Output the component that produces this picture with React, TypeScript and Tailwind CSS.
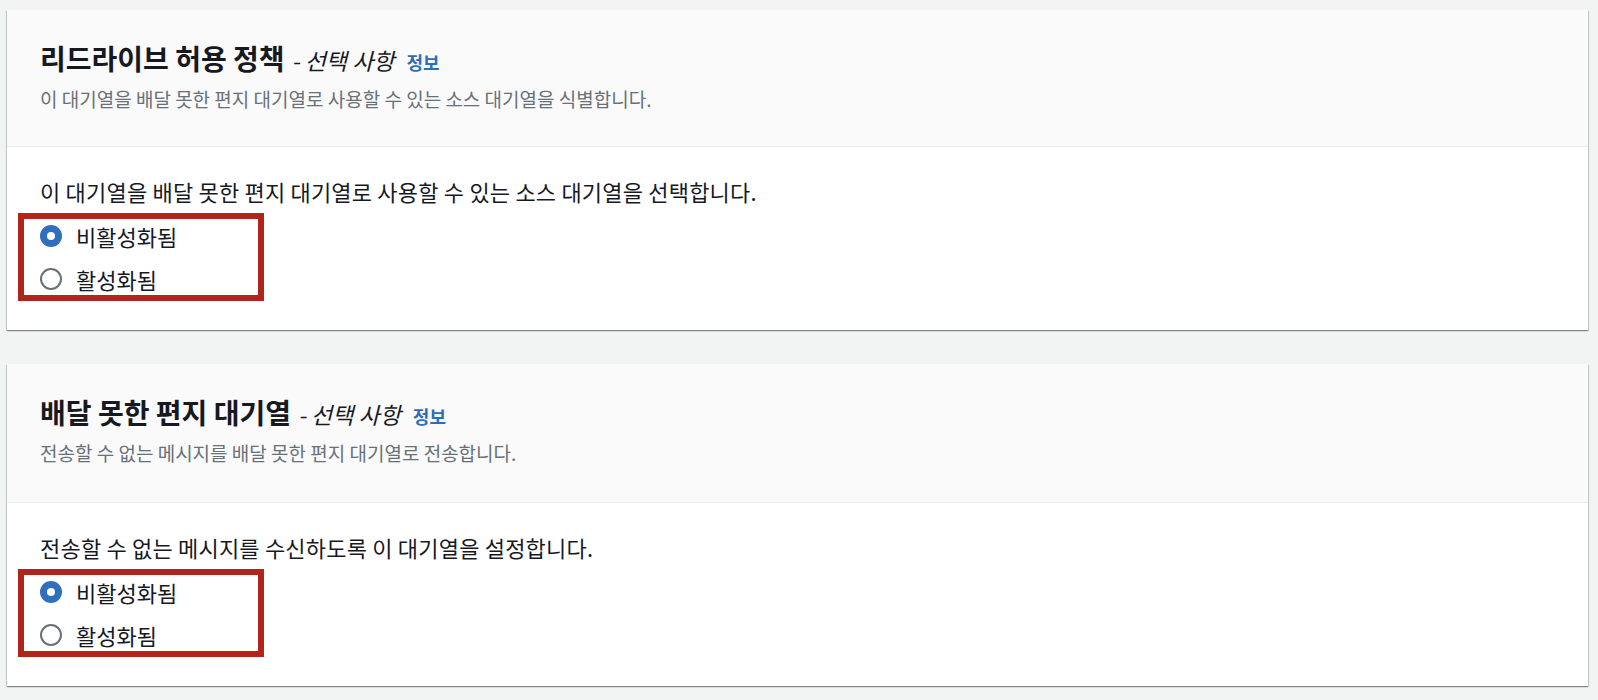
import React from "react";

const font = { fontFamily: '"Noto Sans CJK KR", "Noto Sans", sans-serif' };

interface PanelProps {
  title: string;
  description: string;
  prompt: string;
  headerHeight: string;
}

function Radio({ checked, label }: { checked: boolean; label: string }) {
  return (
    <label className="flex h-[33px] items-center gap-[14px]">
      {checked ? (
        <span className="grid h-[22px] w-[22px] place-items-center rounded-full bg-[#2f6fbd]">
          <span className="h-[8px] w-[8px] rounded-full bg-white" />
        </span>
      ) : (
        <span className="h-[22px] w-[22px] rounded-full border-2 border-[#687078] bg-white" />
      )}
      <span className="text-[22px] leading-[28px] text-[#16191f]">{label}</span>
    </label>
  );
}

function Panel({ title, description, prompt, headerHeight }: PanelProps) {
  return (
    <section className="bg-white shadow-[0_1px_1px_0_rgba(0,28,36,0.3),1px_1px_1px_0_rgba(0,28,36,0.15),-1px_1px_1px_0_rgba(0,28,36,0.15)]">
      <div className={`${headerHeight} border-b border-[#eaeded] bg-[#fafafa] px-[33px] pt-[32px]`}>
        <div className="flex items-baseline leading-[32px]">
          <h2 className="text-[28px] font-bold text-[#16191f]">{title}</h2>
          <span className="ml-[7px] text-[23px] italic text-[#16191f]">- 선택 사항</span>
          <a className="ml-[12px] text-[18px] font-bold text-[#2c6db6]">정보</a>
        </div>
        <p className="mt-[9px] text-[19px] leading-[24px] text-[#687078]">{description}</p>
      </div>
      <div className="pb-[29px] pt-[30px]">
        <p className="px-[33px] text-[22px] leading-[28px] tracking-[0.2px] text-[#16191f]">{prompt}</p>
        <div className="ml-[11px] mt-[8px] flex w-[246px] flex-col gap-[10px] border-[6px] border-[#b1241b] pl-[16px]">
          <Radio checked label="비활성화됨" />
          <Radio checked={false} label="활성화됨" />
        </div>
      </div>
    </section>
  );
}

export default function App() {
  return (
    <div style={font} className="min-h-[700px] bg-[#f2f3f3] pb-[14px] pl-[7px] pr-[10px] pt-[10px]">
      <div className="flex flex-col gap-[34px]">
        <Panel
          headerHeight="h-[137px]"
          title="리드라이브 허용 정책"
          description="이 대기열을 배달 못한 편지 대기열로 사용할 수 있는 소스 대기열을 식별합니다."
          prompt="이 대기열을 배달 못한 편지 대기열로 사용할 수 있는 소스 대기열을 선택합니다."
        />
        <Panel
          headerHeight="h-[139px]"
          title="배달 못한 편지 대기열"
          description="전송할 수 없는 메시지를 배달 못한 편지 대기열로 전송합니다."
          prompt="전송할 수 없는 메시지를 수신하도록 이 대기열을 설정합니다."
        />
      </div>
    </div>
  );
}
